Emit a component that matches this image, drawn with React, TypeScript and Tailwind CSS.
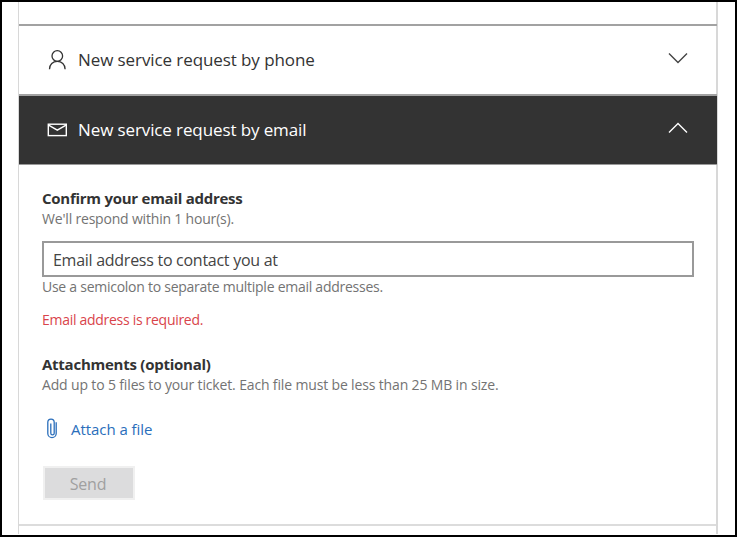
import type { ReactNode } from "react";

function PersonIcon() {
  return (
    <svg width="20" height="22" viewBox="0 0 20 22" fill="none" stroke="currentColor" strokeWidth="1.3">
      <circle cx="10.3" cy="7" r="5.3" />
      <path d="M2.5 20.2C2.5 15.6 5.9 12.4 10.3 12.4s7.8 3.2 7.8 7.8" />
    </svg>
  );
}

function MailIcon() {
  return (
    <svg width="20" height="14" viewBox="0 0 20 14" fill="none" stroke="currentColor" strokeWidth="1.4">
      <rect x="1.3" y="1.2" width="18" height="11.4" />
      <path d="M1.6 2.2l8.7 5 8.7-5" />
    </svg>
  );
}

function Chevron({ up = false }: { up?: boolean }) {
  return (
    <svg width="20" height="12" viewBox="0 0 20 12" fill="none" stroke="currentColor" strokeWidth="1.4">
      <path d={up ? "M1 10.5L10 1.5l9 9" : "M1 1.5l9 9 9-9"} />
    </svg>
  );
}

function ClipIcon() {
  return (
    <svg width="12" height="21" viewBox="0 0 12 21" fill="none" stroke="currentColor" strokeWidth="1.3">
      <path d="M10.2 4.2v11.2a4.2 4.2 0 0 1-8.4 0V4.4a3.2 3.2 0 0 1 6.4 0v10.8a1.6 1.6 0 0 1-3.4 0V5.5" />
    </svg>
  );
}

function Text({ children, className }: { children: ReactNode; className: string }) {
  return <p className={`whitespace-nowrap ${className}`}>{children}</p>;
}

export default function App() {
  return (
    <div className="h-[537px] w-[737px] overflow-hidden border-2 border-black bg-white pr-[17px] pl-4 font-['Open_Sans','Noto_Sans',sans-serif] text-[#333]">
      <main className="h-[532px] border-r-2 border-l border-[#d8d8d8]">
        <div className="h-[22px]" />
        <section className="-mr-px flex h-[70px] items-center justify-between border-t-2 border-[#a2a2a2] pr-[29px] pl-7">
          <div className="flex items-center">
            <PersonIcon />
            <Text className="ml-[11px] text-[17px] leading-6 tracking-[-0.09px]">New service request by phone</Text>
          </div>
          <div className="-mt-1 text-[#444]">
            <Chevron />
          </div>
        </section>
        <section className="-mr-px flex h-[71px] items-center justify-between border-t-2 border-b border-t-[#a2a2a2] border-b-[#999] bg-[#333] pr-[29px] pl-7 text-white">
          <div className="flex items-center">
            <MailIcon />
            <Text className="ml-[11px] text-[17px] leading-6 tracking-[-0.11px]">New service request by email</Text>
          </div>
          <div className="-mt-1">
            <Chevron up />
          </div>
        </section>
        <form className="h-[361px] border-b-2 border-[#dcdcdc] pt-[23px] pr-[22px] pl-[23px]">
          <Text className="text-[15px] leading-5 font-bold tracking-[-0.26px]">Confirm your email address</Text>
          <Text className="mt-px text-sm leading-5 tracking-[-0.19px] text-[#737373]">We'll respond within 1 hour(s).</Text>
          <div className="mt-3 flex h-9 items-center border-2 border-[#999] pt-px pl-[9px]">
            <Text className="text-[16px] leading-6 tracking-[-0.27px] text-[#444]">Email address to contact you at</Text>
          </div>
          <Text className="text-sm leading-5 tracking-[-0.26px] text-[#737373]">Use a semicolon to separate multiple email addresses.</Text>
          <Text className="mt-[13px] text-sm leading-5 tracking-[-0.29px] text-[#d9444b]">Email address is required.</Text>
          <Text className="mt-6 text-[15px] leading-5 font-bold tracking-[-0.25px]">Attachments (optional)</Text>
          <Text className="mt-px text-sm leading-5 tracking-[-0.15px] text-[#737373]">Add up to 5 files to your ticket. Each file must be less than 25 MB in size.</Text>
          <div className="mt-[23px] flex h-[21px] items-center pl-1 text-[#2a6ebb]">
            <ClipIcon />
            <Text className="ml-[13px] text-[15px] leading-5 tracking-[-0.05px]">Attach a file</Text>
          </div>
          <button type="button" className="mt-[27px] ml-px flex h-[34px] w-[92px] items-center justify-center border-2 border-[#f0f0f0] bg-[#dcdcdd] pt-0.5 pr-0.5 text-[16px] leading-6 tracking-[-0.2px] text-[#a0a0a0]">
            Send
          </button>
        </form>
      </main>
    </div>
  );
}
